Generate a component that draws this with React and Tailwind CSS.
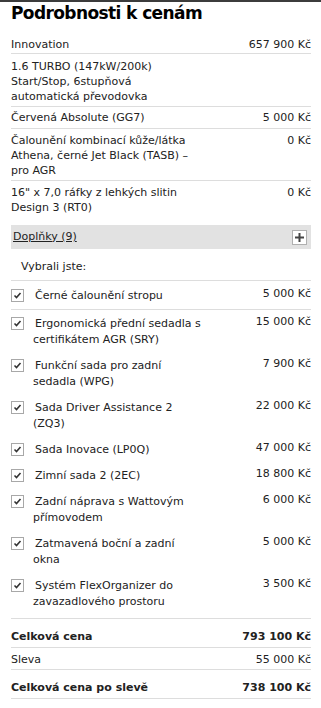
import React from 'react';

const baseRows = [
  { label: 'Innovation', price: '657 900 Kč', pad: 'pt-[4px] pb-[1px]' },
  { label: '1.6 TURBO (147kW/200k) Start/Stop, 6stupňová automatická převodovka', price: '', pad: 'pt-[5px] pb-[2px]' },
  { label: 'Červená Absolute (GG7)', price: '5 000 Kč', pad: 'pt-[3px] pb-[3px]' },
  { label: 'Čalounění kombinací kůže/látka Athena, černé Jet Black (TASB) – pro AGR', price: '0 Kč', pad: 'pt-[4px] pb-[2px]' },
  { label: '16" x 7,0 ráfky z lehkých slitin Design 3 (RT0)', price: '0 Kč', pad: 'pt-[4px] pb-[10px]', last: true },
];

const extras = [
  { label: 'Černé čalounění stropu', price: '5 000 Kč' },
  { label: 'Ergonomická přední sedadla s certifikátem AGR (SRY)', price: '15 000 Kč' },
  { label: 'Funkční sada pro zadní sedadla (WPG)', price: '7 900 Kč' },
  { label: 'Sada Driver Assistance 2 (ZQ3)', price: '22 000 Kč' },
  { label: 'Sada Inovace (LP0Q)', price: '47 000 Kč' },
  { label: 'Zimní sada 2 (2EC)', price: '18 800 Kč' },
  { label: 'Zadní náprava s Wattovým přímovodem', price: '6 000 Kč' },
  { label: 'Zatmavená boční a zadní okna', price: '5 000 Kč' },
  { label: 'Systém FlexOrganizer do zavazadlového prostoru', price: '3 500 Kč' },
];

function Check() {
  return (
    <span className="mt-[1px] flex h-[13px] w-[13px] shrink-0 items-center justify-center border border-[#a8a8a8] bg-white">
      <svg width="9" height="9" viewBox="0 0 9 9">
        <path d="M1.5 4.5 L3.5 6.5 L7.5 2" fill="none" stroke="#333" strokeWidth="1.6" />
      </svg>
    </span>
  );
}

export default function App() {
  return (
    <div className="min-h-[708px] bg-white text-[#222] text-[11px]" style={{ fontFamily: '"DejaVu Sans", Verdana, sans-serif' }}>
      <div className="h-[2px] bg-[#3c3c3c]" />
      <div className="pl-[11px] pr-[10px]">
        <h1 className="pb-[9px] text-[17px] font-bold leading-[22px] tracking-[-0.6px] text-black">Podrobnosti k cenám</h1>

        {/* Base configuration */}
        {baseRows.map((row, i) => (
          <div
            key={i}
            className={`flex justify-between leading-[15px] ${row.pad} ${row.last ? '' : 'border-b border-[#ddd]'}`}
          >
            <span className="w-[192px]">{row.label}</span>
            <span className="whitespace-nowrap">{row.price}</span>
          </div>
        ))}

        {/* Extras header */}
        <div className="flex h-[24px] items-center justify-between bg-[#e2e2e2] pl-[2px] pr-[4px]">
          <span className="underline">Doplňky (9)</span>
          <span className="flex h-[15px] w-[15px] items-center justify-center border border-[#b0b0b0] bg-white">
            <svg width="11" height="11" viewBox="0 0 11 11">
              <path d="M5.5 1 V10 M1 5.5 H10" stroke="#444" strokeWidth="2" />
            </svg>
          </span>
        </div>

        <div className="border-b border-[#ddd] pb-[6px] pl-[10px] pt-[10px] leading-[15px]">Vybrali jste:</div>

        {extras.map((item, i) => (
          <div
            key={i}
            className={`flex justify-between leading-[16px] ${i === 0 ? 'border-b border-[#ddd] pt-[7px] pb-[5px]' : 'pt-[6px] pb-[4px]'}`}
          >
            <div className="flex">
              <Check />
              <span className="ml-[9px] w-[170px] indent-[2px]">{item.label}</span>
            </div>
            <span className="-mt-[2px] whitespace-nowrap">{item.price}</span>
          </div>
        ))}

        {/* Totals */}
        <div className="mt-[4px] border-t border-[#ddd]">
          <div className="flex justify-between border-b border-[#ddd] pt-[10px] pb-[3px] font-bold leading-[15px]">
            <span>Celková cena</span>
            <span>793 100 Kč</span>
          </div>
          <div className="flex justify-between border-b border-[#ddd] pt-[4px] pb-[2px] leading-[15px]">
            <span>Sleva</span>
            <span>55 000 Kč</span>
          </div>
          <div className="flex justify-between border-b border-[#ddd] pt-[10px] pb-[3px] font-bold leading-[15px]">
            <span>Celková cena po slevě</span>
            <span>738 100 Kč</span>
          </div>
        </div>
      </div>
    </div>
  );
}
